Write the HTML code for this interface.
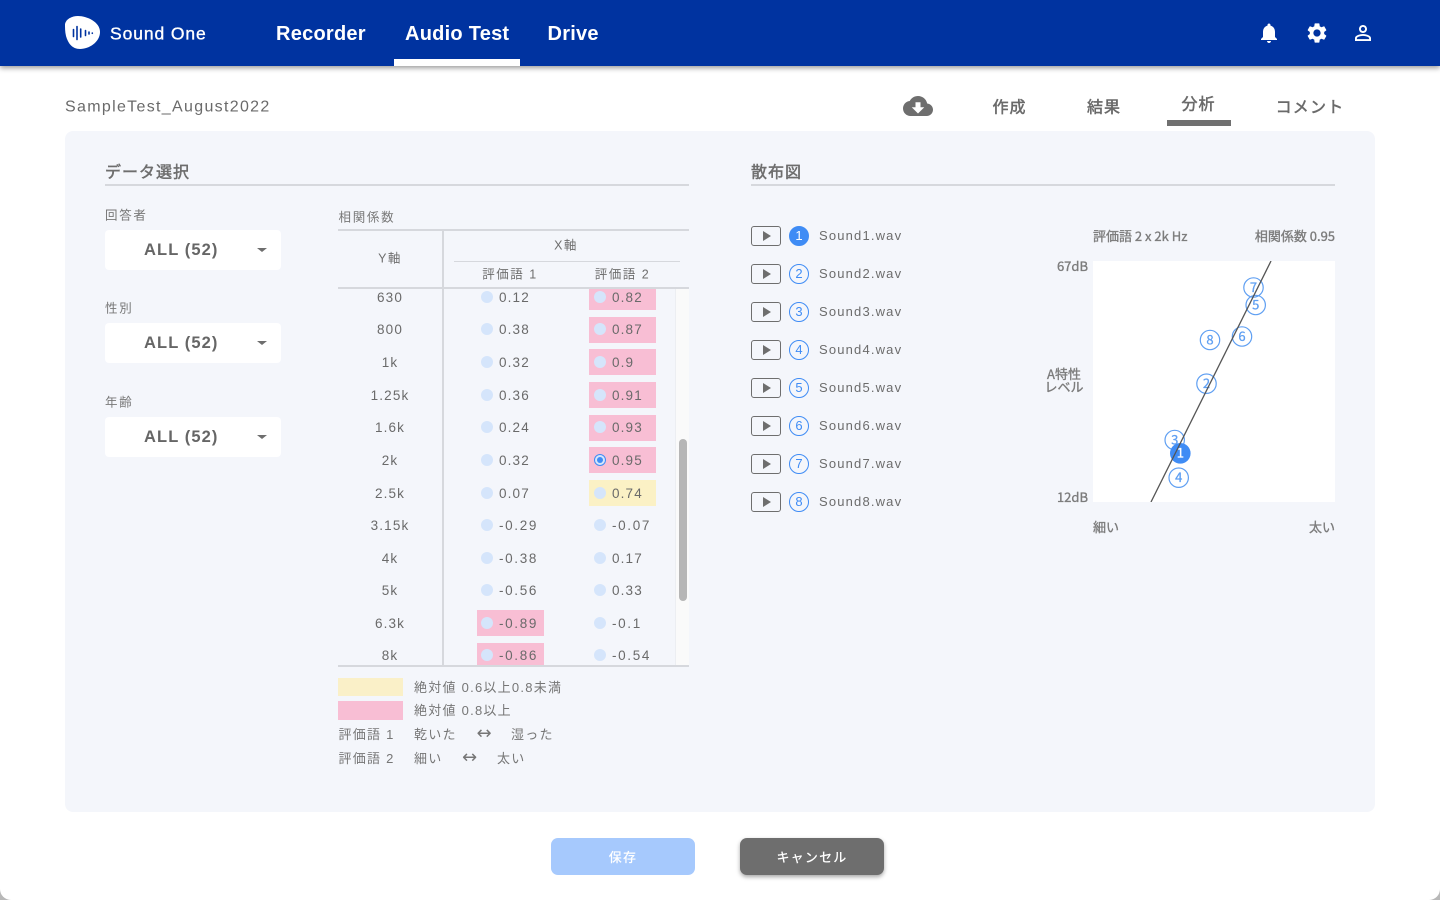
<!DOCTYPE html>
<html lang="ja"><head><meta charset="utf-8"><title>Sound One</title>
<style>
*{box-sizing:border-box}
html,body{margin:0;padding:0;width:1440px;height:900px;overflow:hidden;background:#b8b8b8}
body{font-family:"Liberation Sans","Noto Sans CJK JP",sans-serif;color:#6e6e6e}
#page{position:relative;width:1440px;height:900px;background:#fff;border-radius:0 0 11px 11px;overflow:hidden}
.a{position:absolute}
.t{position:absolute;white-space:nowrap;transform:translateY(-50%);line-height:1.2}
.c{position:absolute;white-space:nowrap;transform:translate(-50%,-50%);line-height:1.2}
#hd{left:0;top:0;width:1440px;height:66px;background:#0033a0;box-shadow:0 2px 5px rgba(0,0,0,.4);z-index:2}
.nav{color:#fff;font-size:20px;font-weight:bold;letter-spacing:.25px}
.tab{font-size:16px;letter-spacing:1px;color:#6a6a6a;font-family:"Noto Sans CJK JP",sans-serif;-webkit-text-stroke:.5px #6a6a6a}
#panel{left:65px;top:131px;width:1310px;height:681px;background:#f4f6fb;border-radius:8px}
.h{font-size:16px;letter-spacing:1px;font-family:"Noto Sans CJK JP",sans-serif;-webkit-text-stroke:.5px #6e6e6e}
.ln{background:#d6d8dd}
.lb{font-size:12.5px;letter-spacing:1.7px;color:#777}
.dd{left:105px;width:176px;height:40px;background:#fff;border-radius:4px}
.dd b{position:absolute;left:39px;top:10px;font-size:16.5px;line-height:20px;font-weight:bold;letter-spacing:1.1px;color:#666;white-space:nowrap}
.dd i{position:absolute;left:151.5px;top:18px;width:0;height:0;border-left:5px solid transparent;border-right:5px solid transparent;border-top:4.5px solid #6e6e6e}
.th{font-size:12.5px;letter-spacing:1.5px;color:#6e6e6e}
#clip{left:338px;top:289px;width:337px;height:376px;overflow:hidden}
.r{position:absolute;left:0;width:337px;height:26px;font-size:13.5px;letter-spacing:1.15px;line-height:26px;color:#6a6a6a}
.r>*{position:absolute;top:0}
.r s{text-decoration:none;left:0;width:104px;text-align:center;top:.7px}
.r u{text-decoration:none;left:161px;top:.7px}
.r .x{left:274px}
.r .m{letter-spacing:1.65px}
.r em{top:6.5px;width:12px;height:12px;border-radius:50%;background:#d5e5fb}
.r em.p{left:143px}
.r em.q{left:256px}
.r q{quotes:none;width:67px;height:26px}
.r q.p1{left:138.5px}
.r q.p2{left:251px}
.pk{background:#f8bed4}
.yl{background:#fbf1c5}
.leg{font-size:13px;letter-spacing:1.25px;color:#767676}
.arr{font-family:"DejaVu Sans",sans-serif;font-size:18px;letter-spacing:0;color:#767676}
.play{left:751px;width:30px;height:20px;border:1px solid #6e6e6e;border-radius:3px}
.play i{position:absolute;left:11px;top:4px;width:0;height:0;border-top:5px solid transparent;border-bottom:5px solid transparent;border-left:8.5px solid #6e6e6e}
.n{left:789px;width:20px;height:20px;border-radius:50%;border:1px solid #3f8cf5;color:#3f8cf5;font-size:13px;line-height:18px;text-align:center;background:transparent}
.n.on{background:#3f8cf5;color:#fff}
.snd{left:819px;font-size:13px;letter-spacing:1.17px;color:#6c6c6c}
.ch{font-family:"Noto Sans CJK JP",sans-serif;font-size:13px;color:#7c7c7c;letter-spacing:0;-webkit-text-stroke:.35px #7c7c7c}
.btn{top:838px;width:144px;height:37px;border-radius:7px;color:#fff;font-size:13px;font-weight:500;letter-spacing:1.2px;text-align:center;line-height:37px;font-family:"Noto Sans CJK JP",sans-serif}
</style></head><body>
<div id="page">
<div id="hd" class="a">
  <svg class="a" style="left:65px;top:16px" width="36" height="35" viewBox="0 0 36 35"><path fill="#fff" d="M0 8C1 3 7 0 13 0C22 0 35 6 35 16C35 26 24 33 15 33C7 33 3 27 1 20C0 16 0 12 0 8Z"/><g fill="none" stroke="#0033a0" stroke-width="1.6" stroke-linecap="round"><path d="M8.500 13.500v7M12 10.500v13M15.700 13v8M20.500 14.500v5M24 16v2"/><path d="M27.300 17v.3"/></g></svg>
  <div class="t" style="left:110px;top:33.500px;color:#fff;font-size:17.500px;letter-spacing:.9px;-webkit-text-stroke:.35px #fff">Sound One</div>
  <div class="t nav" style="left:276px;top:33.800px">Recorder</div>
  <div class="t nav" style="left:405px;top:33.800px">Audio Test</div>
  <div class="t nav" style="left:547.500px;top:33.800px">Drive</div>
  <div class="a" style="left:394px;top:59px;width:126px;height:7px;background:#fff"></div>
  <svg class="a" style="left:1257.300px;top:21px" width="24" height="24" viewBox="0 0 24 24"><path fill="#fff" d="M12 22c1.100 0 2-.9 2-2h-4c0 1.100.9 2 2 2zm6-6v-5c0-3.070-1.630-5.640-4.500-6.320V4c0-.83-.67-1.500-1.500-1.500s-1.500.67-1.500 1.500v.68C7.640 5.360 6 7.920 6 11v5l-2 2v1h16v-1l-2-2z"/></svg>
  <svg class="a" style="left:1304.500px;top:21px" width="24" height="24" viewBox="0 0 24 24"><path fill="#fff" d="M19.140 12.940c.04-.3.060-.61.060-.94 0-.32-.02-.64-.07-.94l2.030-1.580c.18-.14.230-.41.120-.61l-1.920-3.320c-.12-.22-.37-.29-.59-.22l-2.390.96c-.5-.38-1.030-.7-1.620-.94l-.36-2.540c-.04-.24-.24-.41-.48-.41h-3.840c-.24 0-.43.170-.47.410l-.36 2.540c-.59.240-1.130.57-1.620.94l-2.390-.96c-.22-.08-.47 0-.59.220L2.740 8.870c-.12.210-.08.470.12.610l2.030 1.580c-.05.300-.09.630-.09.940s.02.640.07.940l-2.030 1.580c-.18.140-.23.410-.12.610l1.920 3.320c.12.220.37.290.59.220l2.390-.96c.5.380 1.030.7 1.620.94l.36 2.540c.05.240.24.410.48.410h3.840c.24 0 .44-.17.47-.41l.36-2.540c.59-.24 1.130-.56 1.620-.94l2.390.96c.22.080.47 0 .59-.22l1.920-3.320c.12-.22.070-.47-.12-.61l-2.010-1.580zM12 15.600c-1.980 0-3.600-1.620-3.600-3.600s1.620-3.600 3.600-3.600 3.600 1.620 3.600 3.600-1.620 3.600-3.600 3.600z"/></svg>
  <svg class="a" style="left:1351px;top:21px" width="24" height="24" viewBox="0 0 24 24"><path fill="#fff" d="M12 5.900c1.160 0 2.100.94 2.100 2.100s-.94 2.100-2.100 2.100S9.900 9.160 9.900 8s.94-2.100 2.100-2.100m0 9c2.970 0 6.100 1.460 6.100 2.100v1.100H5.900V17c0-.64 3.130-2.100 6.100-2.100M12 4C9.790 4 8 5.790 8 8s1.790 4 4 4 4-1.790 4-4-1.790-4-4-4zm0 9c-2.670 0-8 1.340-8 4v3h16v-3c0-2.660-5.330-4-8-4z"/></svg>
</div>

<div class="t" style="left:65px;top:106.500px;font-size:16px;letter-spacing:1.32px;color:#6a6a6a">SampleTest_August2022</div>
<svg class="a" style="left:903px;top:91px" width="30" height="30" viewBox="0 0 24 24"><path fill="#6e6e6e" d="M19.350 10.040C18.670 6.590 15.640 4 12 4 9.110 4 6.600 5.640 5.350 8.040 2.340 8.360 0 10.910 0 14c0 3.310 2.690 6 6 6h13c2.760 0 5-2.240 5-5 0-2.640-2.050-4.780-4.650-4.960zM17 13l-5 5-5-5h3V9h4v4h3z"/></svg>
<div class="c tab" style="left:1009.500px;top:106.300px">作成</div>
<div class="c tab" style="left:1104px;top:106.300px">結果</div>
<div class="c tab" style="left:1198.500px;top:103.300px">分析</div>
<div class="c tab" style="left:1310px;top:106.300px;letter-spacing:1.2px">コメント</div>
<div class="a" style="left:1167px;top:120px;width:64px;height:6px;background:#707070"></div>

<div id="panel" class="a"></div>

<div class="t h" style="left:105px;top:171px">データ選択</div>
<div class="a ln" style="left:105px;top:184px;width:584px;height:2px"></div>
<div class="t h" style="left:751px;top:171px">散布図</div>
<div class="a ln" style="left:751px;top:184px;width:584px;height:2px"></div>

<div class="t lb" style="left:105px;top:215.500px">回答者</div>
<div class="a dd" style="top:230px"><b>ALL (52)</b><i></i></div>
<div class="t lb" style="left:105px;top:309px">性別</div>
<div class="a dd" style="top:323px"><b>ALL (52)</b><i></i></div>
<div class="t lb" style="left:105px;top:402.800px">年齢</div>
<div class="a dd" style="top:416.500px"><b>ALL (52)</b><i></i></div>

<div class="t lb" style="left:338.500px;top:217.500px">相関係数</div>
<div class="a ln" style="left:338px;top:229px;width:351px;height:2px"></div>
<div class="a ln" style="left:442px;top:230px;width:2px;height:436px"></div>
<div class="a ln" style="left:454px;top:261px;width:226px;height:1px"></div>
<div class="a ln" style="left:338px;top:287px;width:351px;height:2px"></div>
<div class="c th" style="left:566px;top:246px">X軸</div>
<div class="c th" style="left:390px;top:259px">Y軸</div>
<div class="c th" style="left:510px;top:275px">評価語 1</div>
<div class="c th" style="left:622.500px;top:275px">評価語 2</div>

<div class="a" style="left:675px;top:289px;width:14px;height:376px;background:#fafafa;border-left:1px solid #eceef2"></div>
<div class="a" style="left:678.500px;top:439px;width:8px;height:162px;background:#b6b6b6;border-radius:4px"></div>

<div id="clip" class="a">
<div class="r" style="top:-5px"><s>630</s><em class="p"></em><u>0.12</u><q class="p2 pk"></q><em class="q"></em><u class="x">0.82</u></div>
<div class="r" style="top:27.700px"><s>800</s><em class="p"></em><u>0.38</u><q class="p2 pk"></q><em class="q"></em><u class="x">0.87</u></div>
<div class="r" style="top:60.400px"><s>1k</s><em class="p"></em><u>0.32</u><q class="p2 pk"></q><em class="q"></em><u class="x">0.9</u></div>
<div class="r" style="top:93px"><s>1.25k</s><em class="p"></em><u>0.36</u><q class="p2 pk"></q><em class="q"></em><u class="x">0.91</u></div>
<div class="r" style="top:125.700px"><s>1.6k</s><em class="p"></em><u>0.24</u><q class="p2 pk"></q><em class="q"></em><u class="x">0.93</u></div>
<div class="r" style="top:158.300px"><s>2k</s><em class="p"></em><u>0.32</u><q class="p2 pk"></q><em class="q" style="background:#d5e5fb;border:1.200px solid #3f8cf5"></em><i style="left:259px;top:9.500px;width:6px;height:6px;border-radius:50%;background:#3f8cf5"></i><u class="x">0.95</u></div>
<div class="r" style="top:191px"><s>2.5k</s><em class="p"></em><u>0.07</u><q class="p2 yl"></q><em class="q"></em><u class="x">0.74</u></div>
<div class="r" style="top:223.500px"><s>3.15k</s><em class="p"></em><u class="m">-0.29</u><em class="q"></em><u class="x m">-0.07</u></div>
<div class="r" style="top:256px"><s>4k</s><em class="p"></em><u class="m">-0.38</u><em class="q"></em><u class="x">0.17</u></div>
<div class="r" style="top:288.700px"><s>5k</s><em class="p"></em><u class="m">-0.56</u><em class="q"></em><u class="x">0.33</u></div>
<div class="r" style="top:321px"><s>6.3k</s><q class="p1 pk"></q><em class="p"></em><u class="m">-0.89</u><em class="q"></em><u class="x m">-0.1</u></div>
<div class="r" style="top:353.700px"><s>8k</s><q class="p1 pk"></q><em class="p"></em><u class="m">-0.86</u><em class="q"></em><u class="x m">-0.54</u></div>
</div>
<div class="a ln" style="left:338px;top:665px;width:351px;height:2px"></div>

<div class="a yl" style="left:338px;top:678px;width:65px;height:18px;background:#faf0c8"></div>
<div class="a pk" style="left:338px;top:701px;width:65px;height:19px"></div>
<div class="t leg" style="left:414px;top:687.500px">絶対値 0.6以上0.8未満</div>
<div class="t leg" style="left:414px;top:711px">絶対値 0.8以上</div>
<div class="t leg" style="left:338.500px;top:734.500px">評価語 1</div>
<div class="t leg" style="left:414px;top:734.500px">乾いた</div>
<div class="c arr" style="left:484px;top:733.500px">↔</div>
<div class="t leg" style="left:511px;top:734.500px">湿った</div>
<div class="t leg" style="left:338.500px;top:758.500px">評価語 2</div>
<div class="t leg" style="left:414px;top:758.500px">細い</div>
<div class="c arr" style="left:469.500px;top:757.500px">↔</div>
<div class="t leg" style="left:497px;top:758.500px">太い</div>

<div class="a play" style="top:226px"><i></i></div><div class="a n on" style="top:226px">1</div><div class="t snd" style="top:236px">Sound1.wav</div>
<div class="a play" style="top:264px"><i></i></div><div class="a n" style="top:264px">2</div><div class="t snd" style="top:274px">Sound2.wav</div>
<div class="a play" style="top:302px"><i></i></div><div class="a n" style="top:302px">3</div><div class="t snd" style="top:312px">Sound3.wav</div>
<div class="a play" style="top:340px"><i></i></div><div class="a n" style="top:340px">4</div><div class="t snd" style="top:350px">Sound4.wav</div>
<div class="a play" style="top:378px"><i></i></div><div class="a n" style="top:378px">5</div><div class="t snd" style="top:388px">Sound5.wav</div>
<div class="a play" style="top:416px"><i></i></div><div class="a n" style="top:416px">6</div><div class="t snd" style="top:426px">Sound6.wav</div>
<div class="a play" style="top:454px"><i></i></div><div class="a n" style="top:454px">7</div><div class="t snd" style="top:464px">Sound7.wav</div>
<div class="a play" style="top:492px"><i></i></div><div class="a n" style="top:492px">8</div><div class="t snd" style="top:502px">Sound8.wav</div>

<div class="t ch" style="left:1093px;top:236px">評価語 2 x 2k Hz</div>
<div class="t ch" style="right:105px;top:236px">相関係数 0.95</div>
<div class="t ch" style="right:352px;top:266px">67dB</div>
<div class="t ch" style="right:352px;top:497px">12dB</div>
<div class="c ch" style="left:1064px;top:374px">A特性</div>
<div class="c ch" style="left:1064px;top:387px">レベル</div>
<div class="t ch" style="left:1093px;top:527px">細い</div>
<div class="t ch" style="right:105px;top:527px">太い</div>

<svg class="a" style="left:1093px;top:261px" width="242" height="241" viewBox="1093 261 242 241">
<rect x="1093" y="261" width="242" height="241" fill="#fff"/>
<g fill="none" stroke="#5f9ff2" stroke-width="1.200">
<circle cx="1253.500" cy="287.500" r="9.700"/><circle cx="1255.700" cy="305" r="9.700"/><circle cx="1242" cy="336.500" r="9.700"/><circle cx="1210" cy="340" r="9.700"/><circle cx="1206.500" cy="383.700" r="9.700"/><circle cx="1174.700" cy="440" r="9.700"/><circle cx="1178.700" cy="477.700" r="9.700"/>
</g>
<circle cx="1180.300" cy="453.300" r="10.300" fill="#3f8cf5"/>
<g font-family="Noto Sans CJK JP,sans-serif" font-size="13" fill="#5f9ff2" text-anchor="middle" stroke="#5f9ff2" stroke-width=".3">
<text x="1253.500" y="292">7</text><text x="1255.700" y="309.500">5</text><text x="1242" y="341">6</text><text x="1210" y="344.500">8</text><text x="1206.500" y="388">2</text><text x="1174.700" y="444.500">3</text><text x="1178.700" y="482">4</text><text x="1180.300" y="457.500" fill="#fff" stroke="#fff">1</text>
</g>
<line x1="1151" y1="502" x2="1271" y2="261" stroke="#555" stroke-width="1.300"/>
</svg>

<div class="a btn" style="left:551px;background:#a6c9fd">保存</div>
<div class="a btn" style="left:740px;background:#6e6e6e;box-shadow:0 2px 4px rgba(0,0,0,.35)">キャンセル</div>
</div>
</body></html>
